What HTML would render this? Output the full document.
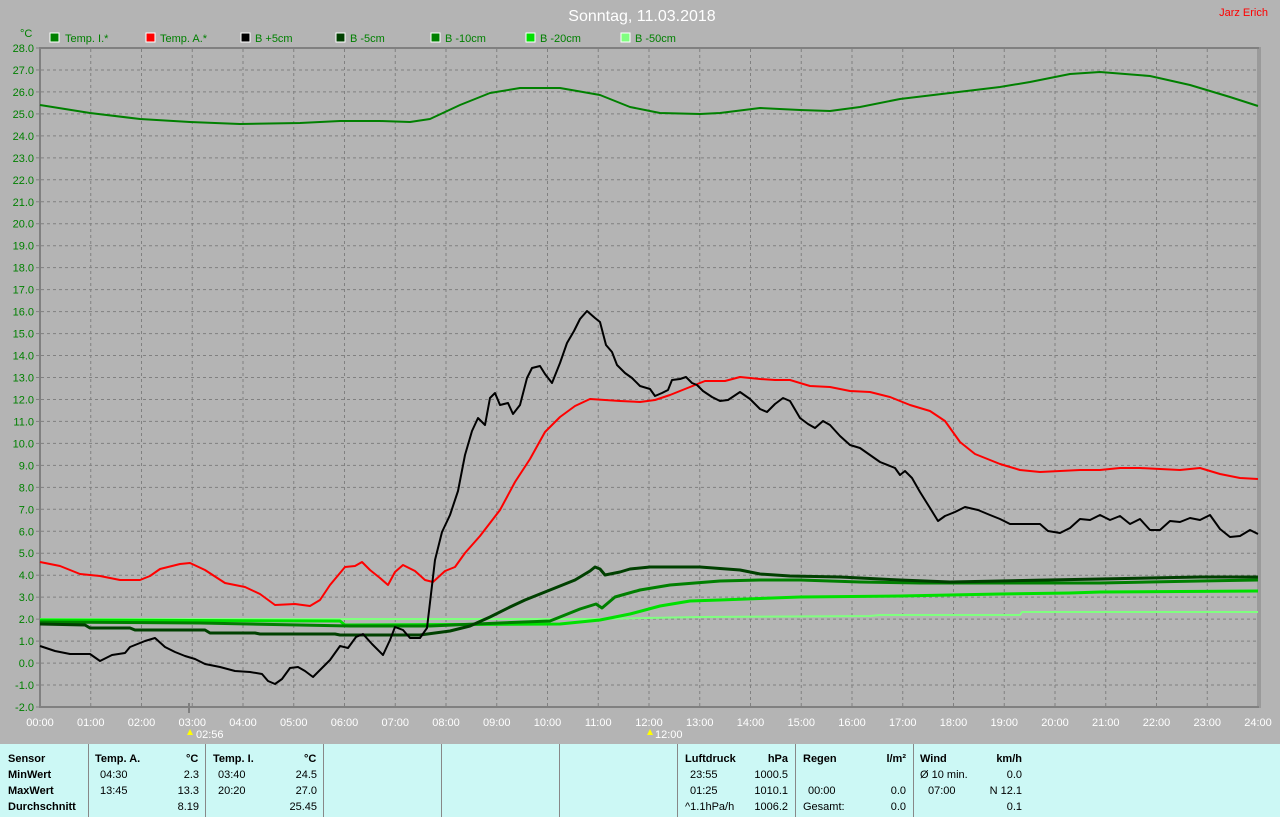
<!DOCTYPE html>
<html><head><meta charset="utf-8"><style>
body{margin:0;width:1280px;height:817px;background:#b4b4b4;overflow:hidden;font-family:"Liberation Sans",sans-serif;}
svg{position:absolute;left:0;top:0}
#panel{position:absolute;left:0;top:744px;width:1280px;height:73px;background:#ccf8f5;font-size:11px;color:#000}
.c{position:absolute;top:0;height:73px;border-left:1px solid #888}
.t{position:absolute;white-space:nowrap}
.b{font-weight:bold}
</style></head><body>
<svg width="1280" height="744" xmlns="http://www.w3.org/2000/svg" font-family="Liberation Sans, sans-serif">
<text x="642" y="21" fill="#fff" font-size="16" text-anchor="middle">Sonntag, 11.03.2018</text>
<text x="1268" y="16" fill="#f00" font-size="11" text-anchor="end">Jarz Erich</text>
<text x="20" y="37" fill="#008000" font-size="11">°C</text>
<g font-size="11" fill="#008000">
<rect x="50" y="33" width="9" height="9" fill="#008000" stroke="#fff"/><text x="65" y="42">Temp. I.*</text>
<rect x="146" y="33" width="9" height="9" fill="#f00" stroke="#fff"/><text x="160" y="42">Temp. A.*</text>
<rect x="241" y="33" width="9" height="9" fill="#000" stroke="#fff"/><text x="255" y="42">B +5cm</text>
<rect x="336" y="33" width="9" height="9" fill="#004000" stroke="#fff"/><text x="350" y="42">B -5cm</text>
<rect x="431" y="33" width="9" height="9" fill="#008000" stroke="#fff"/><text x="445" y="42">B -10cm</text>
<rect x="526" y="33" width="9" height="9" fill="#00e000" stroke="#fff"/><text x="540" y="42">B -20cm</text>
<rect x="621" y="33" width="9" height="9" fill="#80ff80" stroke="#fff"/><text x="635" y="42">B -50cm</text>
</g>
<g id="grid" stroke="#808080" stroke-dasharray="3,3" stroke-width="1"></g>
<line x1="40" y1="48" x2="1259" y2="48" stroke="#808080" stroke-width="2"/>
<line x1="40" y1="47" x2="40" y2="708" stroke="#808080" stroke-width="2"/>
<line x1="40" y1="707" x2="1259" y2="707" stroke="#808080" stroke-width="2"/>
<line x1="1258" y1="47" x2="1258" y2="708" stroke="#808080" stroke-width="1"/>
<line x1="1260" y1="47" x2="1260" y2="708" stroke="#808080" stroke-width="1"/>
<g id="ylab" font-size="11" fill="#008000" text-anchor="end"></g>
<g id="xlab" font-size="11" fill="#fff" text-anchor="middle"></g>
<line x1="189" y1="703" x2="189" y2="713" stroke="#808080" stroke-width="2"/>
<text x="196" y="738" fill="#fff" font-size="11">02:56</text>
<path d="M190 729 l-3 6 h6z" fill="#ff0"/>
<text x="655" y="738" fill="#fff" font-size="11">12:00</text>
<path d="M650 729 l-3 6 h6z" fill="#ff0"/>
<g fill="none" stroke-linejoin="round">
<polyline stroke="#80ff80" stroke-width="2" points="40,619 600,619 700,617 870,616 880,615 1020,615 1022,612 1258,612"/>
<polyline stroke="#00e000" stroke-width="3" points="40,620 340,621 345,625 560,624 580,622 600,620 630,614 660,606 690,601 720,600 800,597 900,596 1000,594 1070,593 1100,592 1258,591"/>
<polyline stroke="#008000" stroke-width="3" points="40,622 200,623 350,626 430,626 500,623 550,621 580,609 596,604 602,608 615,597 640,590 670,585 720,581 760,580 800,580 860,582 920,583 1000,583 1100,583 1200,581 1258,580"/>
<polyline stroke="#004000" stroke-width="3" points="40,624 85,625 90,628 130,628 135,630 205,630 210,633 255,633 260,634 335,634 340,635 420,635 450,631 470,626 490,617 510,607 525,600 545,592 560,586 575,580 590,571 595,567 600,569 605,575 620,572 630,569 650,567 700,567 740,570 760,574 790,576 840,577 900,580 950,582 1000,581 1100,579 1200,577 1258,577"/>
<polyline stroke="#008000" stroke-width="2" points="40,105 90,113 140,119 190,122 240,124 300,123 340,121 380,121 410,122 430,119 460,105 490,93 520,88 560,88 600,95 630,107 660,113 700,114 720,113 760,108 800,110 830,111 860,107 900,99 950,93 1000,87 1030,82 1070,74 1100,72 1150,76 1190,85 1230,97 1258,106"/>
<polyline stroke="#f00" stroke-width="2" points="40,562 60,566 80,574 100,576 120,580 140,580 150,576 160,569 180,564 190,563 205,570 225,583 245,587 260,594 275,605 295,604 310,606 320,600 330,585 345,567 355,566 362,562 370,570 380,578 388,585 395,572 403,565 415,571 425,580 433,582 445,571 455,567 465,553 480,536 500,510 515,482 530,459 545,432 560,417 575,406 590,399 605,400 620,401 640,402 655,400 670,395 690,387 705,381 725,381 740,377 760,379 775,380 790,380 810,386 830,387 850,391 870,392 890,397 910,405 930,411 945,421 960,442 975,454 1000,464 1020,470 1040,472 1060,471 1080,470 1100,470 1120,468 1140,468 1160,469 1180,470 1200,468 1220,474 1240,478 1258,479"/>
<polyline stroke="#000" stroke-width="2" points="40,646 55,651 70,654 90,654 100,661 112,655 125,653 130,647 145,641 155,638 165,647 175,652 185,656 195,659 205,664 220,667 235,671 250,672 262,674 268,681 275,684 282,679 290,668 298,667 305,671 313,677 320,670 330,660 340,646 348,648 356,637 363,634 372,644 383,655 390,640 395,627 403,630 410,638 420,638 427,628 435,560 442,532 450,515 458,491 465,455 472,431 478,418 485,425 490,398 495,393 500,405 508,403 513,414 520,405 527,378 532,368 540,366 545,374 552,383 560,363 567,343 574,331 580,319 587,311 595,318 600,322 606,345 612,352 617,365 625,373 632,378 640,386 650,389 655,396 662,393 668,390 672,380 680,379 686,377 692,383 697,385 703,391 712,397 720,401 728,400 740,392 750,399 760,409 767,412 775,404 783,398 790,401 800,418 808,424 815,428 823,421 830,425 840,436 850,445 860,448 870,455 880,462 895,468 900,475 905,471 912,478 920,492 930,508 938,521 945,516 955,512 965,507 978,510 990,515 1000,519 1010,524 1040,524 1048,531 1060,533 1070,528 1080,519 1090,520 1100,515 1110,520 1120,516 1130,524 1140,519 1150,530 1160,530 1170,521 1180,522 1190,518 1200,520 1210,515 1220,529 1230,537 1240,536 1250,530 1258,534"/>
</g>
</svg>
<div id="panel">
<div class="c" style="left:88px"></div><div class="c" style="left:205px"></div><div class="c" style="left:323px"></div><div class="c" style="left:441px"></div><div class="c" style="left:559px"></div><div class="c" style="left:677px"></div><div class="c" style="left:795px"></div><div class="c" style="left:913px"></div>
<div class="t b" style="left:8px;top:9px">Sensor</div>
<div class="t b" style="left:8px;top:25px">MinWert</div>
<div class="t b" style="left:8px;top:41px">MaxWert</div>
<div class="t b" style="left:8px;top:57px">Durchschnitt</div>
<div class="t b" style="left:95px;top:9px">Temp. A.</div><div class="t b" style="left:186px;top:9px">°C</div>
<div class="t" style="left:100px;top:25px">04:30</div><div class="t" style="right:1081px;top:25px">2.3</div>
<div class="t" style="left:100px;top:41px">13:45</div><div class="t" style="right:1081px;top:41px">13.3</div>
<div class="t" style="right:1081px;top:57px">8.19</div>
<div class="t b" style="left:213px;top:9px">Temp. I.</div><div class="t b" style="left:304px;top:9px">°C</div>
<div class="t" style="left:218px;top:25px">03:40</div><div class="t" style="right:963px;top:25px">24.5</div>
<div class="t" style="left:218px;top:41px">20:20</div><div class="t" style="right:963px;top:41px">27.0</div>
<div class="t" style="right:963px;top:57px">25.45</div>
<div class="t b" style="left:685px;top:9px">Luftdruck</div><div class="t b" style="right:492px;top:9px">hPa</div>
<div class="t" style="left:690px;top:25px">23:55</div><div class="t" style="right:492px;top:25px">1000.5</div>
<div class="t" style="left:690px;top:41px">01:25</div><div class="t" style="right:492px;top:41px">1010.1</div>
<div class="t" style="left:685px;top:57px">^1.1hPa/h</div><div class="t" style="right:492px;top:57px">1006.2</div>
<div class="t b" style="left:803px;top:9px">Regen</div><div class="t b" style="right:374px;top:9px">l/m²</div>
<div class="t" style="left:808px;top:41px">00:00</div><div class="t" style="right:374px;top:41px">0.0</div>
<div class="t" style="left:803px;top:57px">Gesamt:</div><div class="t" style="right:374px;top:57px">0.0</div>
<div class="t b" style="left:920px;top:9px">Wind</div><div class="t b" style="right:258px;top:9px">km/h</div>
<div class="t" style="left:920px;top:25px">Ø 10 min.</div><div class="t" style="right:258px;top:25px">0.0</div>
<div class="t" style="left:928px;top:41px">07:00</div><div class="t" style="right:258px;top:41px">N 12.1</div>
<div class="t" style="right:258px;top:57px">0.1</div>
</div>
<script>
var ns="http://www.w3.org/2000/svg",g=document.getElementById("grid"),yl=document.getElementById("ylab"),xl=document.getElementById("xlab");
function el(p,t,a){var e=document.createElementNS(ns,t);for(var k in a)e.setAttribute(k,a[k]);p.appendChild(e);return e;}
for(var v=-2;v<=28;v++){var y=48+(28-v)*659/30;if(v>-2&&v<28)el(g,"line",{x1:41,x2:1258,y1:y,y2:y});el(g,"line",{x1:36,x2:40,y1:y,y2:y,"stroke-dasharray":"none"});var t=el(yl,"text",{x:34,y:y+4});t.textContent=v.toFixed(1);}
for(var h=0;h<=24;h++){var x=40+h*1218/24;if(h>0&&h<24)el(g,"line",{x1:x,x2:x,y1:49,y2:707});var t=el(xl,"text",{x:x,y:726});t.textContent=(h<10?"0":"")+h+":00";}
</script>
</body></html>
